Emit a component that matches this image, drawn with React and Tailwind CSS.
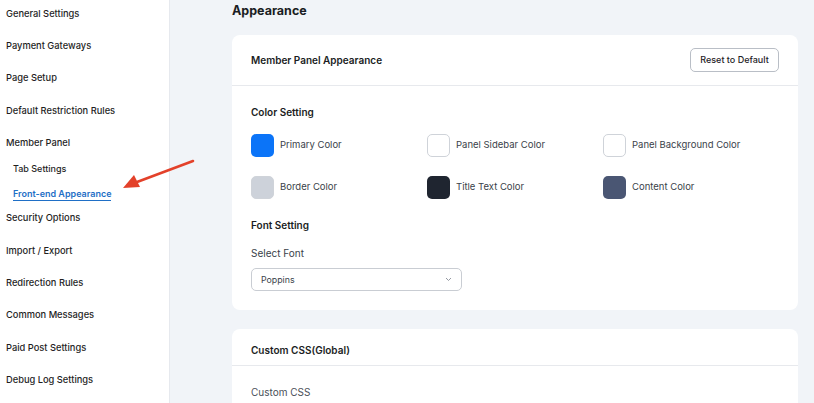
import React from "react";

const font = { fontFamily: "Inter, 'Noto Sans', sans-serif" };

function NavItem({ children, className = "" }) {
  return (
    <div className={`h-[24px] flex items-center pl-[6px] text-[9.3px] font-medium text-[#1f1f1f] ${className}`}>
      {children}
    </div>
  );
}

function Swatch({ color, bordered, label }) {
  return (
    <div className="flex items-center gap-[6px]">
      <div
        className={`w-[23px] h-[23px] rounded-[5px] ${bordered ? "border border-[#cfd3d9]" : ""} ${color}`}
      />
      <span className="text-[9.5px] text-[#3a3f4a]">{label}</span>
    </div>
  );
}

export default function App() {
  return (
    <div className="relative flex w-[814px] h-[403px] overflow-hidden bg-[#f1f4f8]" style={font}>
      {/* sidebar navigation */}
      <aside className="w-[170px] shrink-0 bg-white border-r border-[#e6e9ee]">
        <NavItem className="mt-[2px]">General Settings</NavItem>
        <NavItem className="mt-[8px]">Payment Gateways</NavItem>
        <NavItem className="mt-[8px]">Page Setup</NavItem>
        <NavItem className="mt-[9px]">Default Restriction Rules</NavItem>
        <NavItem className="mt-[8px]">Member Panel</NavItem>
        <div className="h-[24px] flex items-center pl-[13px] text-[9px] font-medium text-[#1f1f1f] mt-[2px]">
          Tab Settings
        </div>
        <div className="h-[24px] flex items-center pl-[13px]">
          <span className="text-[9px] font-semibold text-[#1f6fc6] border-b-[1.5px] border-[#1f6fc6] leading-[13px] mt-[2px]">
            Front-end Appearance
          </span>
        </div>
        <NavItem className="mt-[1px]">Security Options</NavItem>
        <NavItem className="mt-[9px]">Import / Export</NavItem>
        <NavItem className="mt-[8px]">Redirection Rules</NavItem>
        <NavItem className="mt-[8px]">Common Messages</NavItem>
        <NavItem className="mt-[9px]">Paid Post Settings</NavItem>
        <NavItem className="mt-[8px]">Debug Log Settings</NavItem>
      </aside>

      {/* main settings area */}
      <main className="flex-1 pl-[62px] pr-[16px]">
        <h1 className="h-[19px] leading-[19px] pt-[1px] text-[12.5px] font-bold text-[#1a1d23] mb-[16px]">Appearance</h1>

        <section className="bg-white rounded-[8px]">
          <div className="h-[51px] flex items-center justify-between px-[19px] border-b border-[#e7e9ed]">
            <span className="text-[10px] font-semibold text-[#1a1d23]">Member Panel Appearance</span>
            <button className="h-[24px] w-[89px] border border-[#b9bec6] rounded-[5px] text-[9px] font-medium text-[#1f2329] bg-white">
              Reset to Default
            </button>
          </div>
          <div className="px-[19px] pt-[19px] pb-[19px]">
            <div className="h-[14px] leading-[14px] text-[10px] font-semibold text-[#1a1d23]">Color Setting</div>
            <div className="grid grid-cols-3 gap-y-[19px] mt-[15px]">
              <Swatch color="bg-[#0b74f8]" label="Primary Color" />
              <Swatch color="bg-white" bordered label="Panel Sidebar Color" />
              <Swatch color="bg-white" bordered label="Panel Background Color" />
              <Swatch color="bg-[#cdd2da]" bordered label="Border Color" />
              <Swatch color="bg-[#1f2530]" label="Title Text Color" />
              <Swatch color="bg-[#4a5673]" label="Content Color" />
            </div>
            <div className="h-[14px] leading-[14px] text-[10px] font-semibold text-[#1a1d23] mt-[19px]">Font Setting</div>
            <div className="h-[14px] leading-[14px] text-[10px] text-[#3a3f4a] mt-[14px]">Select Font</div>
            <div className="mt-[8px] w-[211px] h-[23px] border border-[#c9cdd3] rounded-[5px] flex items-center justify-between px-[9px]">
              <span className="text-[8.8px] text-[#3a3f4a]">Poppins</span>
              <svg width="7" height="5" viewBox="0 0 7 5" fill="none">
                <path d="M1 1l2.5 2.5L6 1" stroke="#8a8f98" strokeWidth="0.9" />
              </svg>
            </div>
          </div>
        </section>

        <section className="bg-white rounded-[8px] mt-[19px]">
          <div className="h-[37px] pt-[14px] px-[19px] border-b border-[#e7e9ed]">
            <span className="block leading-[14px] text-[10px] font-semibold text-[#1a1d23]">Custom CSS(Global)</span>
          </div>
          <div className="px-[19px] pt-[19px] pb-[20px]">
            <div className="text-[10px] text-[#4a4f58]">Custom CSS</div>
          </div>
        </section>
      </main>

      {/* pointer arrow */}
      <svg className="absolute left-[110px] top-[150px]" width="100" height="50" viewBox="0 0 100 50">
        <path d="M83 11 L27 32" stroke="#e3412a" strokeWidth="2.6" strokeLinecap="round" />
        <path d="M13 38 L24 25 L30 37 Z" fill="#e3412a" />
      </svg>
    </div>
  );
}
